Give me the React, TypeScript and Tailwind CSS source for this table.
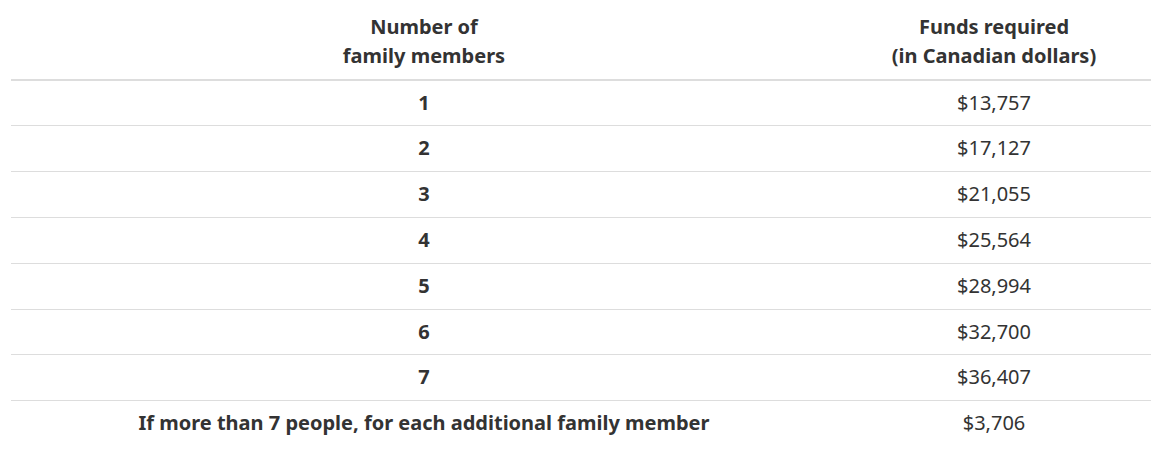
import React from 'react'

const rows = [
  { n: '1', f: '$13,757' },
  { n: '2', f: '$17,127' },
  { n: '3', f: '$21,055' },
  { n: '4', f: '$25,564' },
  { n: '5', f: '$28,994' },
  { n: '6', f: '$32,700' },
  { n: '7', f: '$36,407' },
  { n: 'If more than 7 people, for each additional family member', f: '$3,706' },
]

export default function App(): JSX.Element {
  return (
    <main className="bg-white px-[11px] pt-[5px] text-[20px] leading-[28.8px] text-[#333]" style={{ fontFamily: '"Noto Sans", sans-serif' }}>
      <table className="w-[1140px] border-collapse">
        <thead>
          <tr className="border-b-2 border-[#ddd]">
            <th className="w-[826px] px-2 py-2 text-center font-bold">
              Number of
              <br />
              family members
            </th>
            <th className="px-2 py-2 text-center font-bold">
              Funds required
              <br />
              (in Canadian dollars)
            </th>
          </tr>
        </thead>
        <tbody>
          {rows.map((r, i) => (
            <tr key={r.n} className={i < rows.length - 1 ? 'border-b border-[#ddd]' : ''}>
              <th className="px-2 py-2 text-center font-bold">{r.n}</th>
              <td className="px-2 py-2 text-center">{r.f}</td>
            </tr>
          ))}
        </tbody>
      </table>
    </main>
  )
}
